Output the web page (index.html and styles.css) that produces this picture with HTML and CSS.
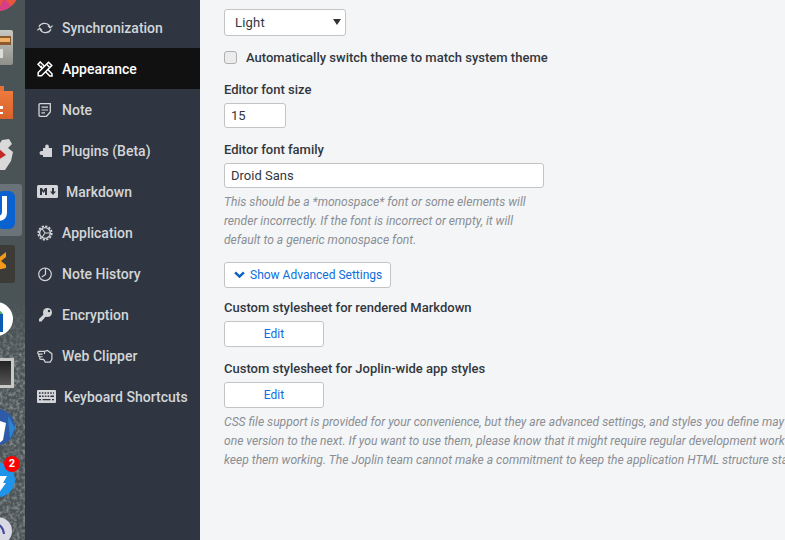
FILE: index.html
```html
<!DOCTYPE html>
<html lang="en">
<head>
<meta charset="utf-8">
<title>Joplin options</title>
<link rel="stylesheet" href="styles.css">
</head>
<body>
<div class="app">
  <aside class="dock">
    <svg class="dock-art" width="25" height="540" viewBox="0 0 25 540">
      <defs>
        <filter id="rock" x="0" y="0" width="100%" height="100%">
          <feTurbulence type="fractalNoise" baseFrequency="0.3" numOctaves="3" seed="4"/>
          <feColorMatrix values="0 0 0 0 .5  0 0 0 0 .51  0 0 0 0 .5  1.2 0 0 0 -.45"/>
        </filter>
        <linearGradient id="fade" x1="0" y1="0" x2="0" y2="1">
          <stop offset="0" stop-color="#fff" stop-opacity="0"/>
          <stop offset=".25" stop-color="#fff" stop-opacity="1"/>
        </linearGradient>
        <mask id="fadeMask"><rect y="300" width="25" height="240" fill="url(#fade)"/></mask>
        <linearGradient id="fileBody" x1="0" y1="0" x2="0" y2="1">
          <stop offset="0" stop-color="#c9c9c4"/><stop offset="1" stop-color="#8f8f8a"/>
        </linearGradient>
        <linearGradient id="screen" x1="0" y1="0" x2="0" y2="1">
          <stop offset="0" stop-color="#222"/><stop offset="1" stop-color="#555"/>
        </linearGradient>
        <linearGradient id="bag" x1="0" y1="0" x2="0" y2="1">
          <stop offset="0" stop-color="#ee7a3d"/><stop offset="1" stop-color="#d9622b"/>
        </linearGradient>
      </defs>
      <rect y="300" width="25" height="240" filter="url(#rock)" mask="url(#fadeMask)"/>
      <circle cx="-2" cy="-10" r="21" fill="#e8563f"/>
      <path d="M-2 11A21 21 0 0 0 11 6L4 -2Z" fill="#d63f88"/>
      <rect x="-4" y="30" width="17" height="35" rx="2" fill="url(#fileBody)"/>
      <rect x="-4" y="36" width="15" height="9" fill="#8d5a30"/>
      <rect x="-4" y="38" width="14" height="4" fill="#f0b267"/>
      <rect x="-4" y="49" width="7" height="9" fill="#dcdcd8"/>
      <path d="M-2 91H13V119H-2Z" fill="url(#bag)"/>
      <path d="M0 91V86H4V91Z" fill="#e66f33"/>
      <rect x="-2" y="106" width="5" height="3" fill="#fff"/>
      <rect x="-2" y="112" width="5" height="2" fill="#fff"/>
      <path d="M2 140L9 139L12 144L8 148L13 152L11 161L5 170H-2V146Z" fill="#d9d9d9"/>
      <path d="M-2 148L6 155L-2 160Z" fill="#c22a2a"/>
      <rect x="-3" y="184" width="25" height="52" rx="3" fill="#6a7378"/>
      <rect x="-3" y="191" width="18" height="38" rx="6" fill="#0a62d0"/>
      <path d="M2 196H7V212C7 219 3 221 -3 221V216C1 216 2 214 2 212Z" fill="#fff"/>
      <rect x="-3" y="245" width="18" height="38" rx="3" fill="#3d3b38"/>
      <path d="M-3 259L6 252V257L1 261L6 265V268L-3 270V264Z" fill="#f39a1b"/>
      <circle cx="-4" cy="319" r="17" fill="#fff"/>
      <path d="M-3 314H3V332H-3Z" fill="#0d5bb5"/>
      <path d="M-3 307L3 314H-3Z" fill="#48ad63"/>
      <rect x="-3" y="358" width="17" height="30" fill="#c8c8c4"/>
      <rect x="-3" y="361" width="14" height="24" fill="url(#screen)"/>
      <circle cx="-3" cy="427" r="18" fill="#2f5aa8"/>
      <path d="M-3 420L6 423L3 440L-3 445Z" fill="#fff"/>
      <path d="M8 416L15 428L10 439Z" fill="#2a86cf"/>
      <circle cx="-2" cy="480" r="17" fill="#2094e8"/>
      <path d="M-3 476H7L3 483H6L-2 494L0 485H-3Z" fill="#fff"/>
      <circle cx="-2" cy="531" r="14" fill="#d9d9e6"/>
      <path d="M-3 524Q3 526 4 534" fill="none" stroke="#3f4a99" stroke-width="2"/>
    </svg>
    <span class="badge">2</span>
  </aside>
  <nav class="side">
    <a class="item"><svg class="ico" viewBox="0 0 16 16"><path d="M1.9 6.6A6.2 6.2 0 0 1 13.2 7.5M14 9.4A6.2 6.2 0 0 1 2.7 8.5" fill="none" stroke="currentColor" stroke-width="1.2"/><path d="M10.9 5.6L13.2 8L15.6 5.6M0.4 10.4L2.7 8L5.1 10.4" fill="none" stroke="currentColor" stroke-width="1.2"/></svg><span>Synchronization</span></a>
    <a class="item active"><svg class="ico" viewBox="0 0 16 16"><path d="M3.2 1L15 12.8V15H12.8L1 3.2Z" fill="none" stroke="currentColor" stroke-width="1.5"/><path d="M5 5L3.5 6.5M7.5 7.5L6 9" stroke="currentColor" stroke-width="1.2"/><path d="M11.5 1.2L14.8 4.5L4.5 14.8H1.2V11.5Z" fill="#111" stroke="currentColor" stroke-width="1.5"/><path d="M9.5 3.2L12.8 6.5" stroke="currentColor" stroke-width="1.3"/></svg><span>Appearance</span></a>
    <a class="item"><svg class="ico" viewBox="0 0 16 16"><path d="M3 1.7H13.3V10L9.5 14.3H3A1 1 0 0 1 2 13.3V2.7A1 1 0 0 1 3 1.7Z" fill="none" stroke="currentColor" stroke-width="1.3"/><path d="M4.5 5.2H11M4.5 8H11M4.5 10.8H8" stroke="currentColor" stroke-width="1.2"/></svg><span>Note</span></a>
    <a class="item"><svg class="ico" viewBox="0 0 16 16"><path d="M6 5H8.2V3.2A1.8 1.8 0 0 1 11.8 3.2V5H15V14H6V12H4.5A2 2 0 0 1 4.5 8H6Z" fill="currentColor"/></svg><span>Plugins (Beta)</span></a>
    <a class="item wide"><svg class="ico md" viewBox="0 0 21 13"><rect width="21" height="13" rx="1.5" fill="currentColor"/><path d="M3 10V3H5L6.5 5.5L8 3H10V10H8V6L6.5 8L5 6V10ZM15 3H17V6.5H19L16 10L13 6.5H15Z" fill="#2f3641"/></svg><span>Markdown</span></a>
    <a class="item"><svg class="ico" viewBox="0 0 16 16"><circle cx="8" cy="8" r="5.4" fill="none" stroke="currentColor" stroke-width="1.4"/><circle cx="8" cy="8" r="6.8" fill="none" stroke="currentColor" stroke-width="1.6" stroke-dasharray="2.2 1.36"/><path d="M8 8H13M8 8L5 3.5M8 8L5 12.5" stroke="currentColor" stroke-width="1.1"/></svg><span>Application</span></a>
    <a class="item"><svg class="ico" viewBox="0 0 16 16"><circle cx="8" cy="8.3" r="6.3" fill="none" stroke="currentColor" stroke-width="1.2"/><path d="M8.5 2V8.5L4.8 11" fill="none" stroke="currentColor" stroke-width="1.2"/></svg><span>Note History</span></a>
    <a class="item"><svg class="ico" viewBox="0 0 16 16"><circle cx="10.5" cy="5.5" r="4.5" fill="currentColor"/><circle cx="12" cy="4" r="1.2" fill="#2f3641"/><path d="M8 6L10 8L4.5 14.5H2V12Z" fill="currentColor"/></svg><span>Encryption</span></a>
    <a class="item"><svg class="ico" viewBox="0 0 17 16"><path d="M8 3.2H2.2A1.4 1.4 0 0 0 2.2 6H6M6 6H3.2A1.4 1.4 0 0 0 3.2 8.8H6M6 8.8H4.2A1.4 1.4 0 0 0 4.2 11.6H7L8.8 14.5H14L15.8 11.5V5.5L11 2.2L8 3.2V6" fill="none" stroke="currentColor" stroke-width="1.3"/></svg><span>Web Clipper</span></a>
    <a class="item kbd"><svg class="ico key" viewBox="0 0 19 13"><rect width="19" height="13" rx="1" fill="currentColor"/><path d="M2 3H3.6M4.8 3H6.4M7.6 3H9.2M10.4 3H12M13.2 3H14.8M16 3H17M2 6.2H4M5 6.2H6.6M7.8 6.2H9.4M10.6 6.2H12.2M13.4 6.2H17M2 9.6H4M5.5 9.6H13.5M15 9.6H17" stroke="#2f3641" stroke-width="1.4"/></svg><span>Keyboard Shortcuts</span></a>
  </nav>
  <main class="panel">
    <div class="select">Light<span class="caret"></span></div>
    <label class="check"><span class="box"></span><span>Automatically switch theme to match system theme</span></label>
    <h3 class="label first">Editor font size</h3>
    <input class="num" value="15">
    <h3 class="label fam">Editor font family</h3>
    <input class="text" value="Droid Sans">
    <p class="hint narrow">This should be a *monospace* font or some elements will render incorrectly. If the font is incorrect or empty, it will default to a generic monospace font.</p>
    <button class="adv"><svg class="chev" viewBox="0 0 10 7"><path d="M1 1.2L5 5L9 1.2" fill="none" stroke="currentColor" stroke-width="2.2"/></svg>Show Advanced Settings</button>
    <h3 class="label css">Custom stylesheet for rendered Markdown</h3>
    <button class="edit">Edit</button>
    <h3 class="label css2">Custom stylesheet for Joplin-wide app styles</h3>
    <button class="edit">Edit</button>
    <p class="hint wide-hint">CSS file support is provided for your convenience, but they are advanced settings, and styles you define may<br>one version to the next. If you want to use them, please know that it might require regular development work<br>keep them working. The Joplin team cannot make a commitment to keep the application HTML structure sta</p>
  </main>
</div>
</body>
</html>
```

FILE: styles.css
```css
* { box-sizing: border-box; }
html, body { margin: 0; height: 100%; overflow: hidden; }
body { font-family: Roboto, sans-serif; }
.app { display: flex; width: 785px; height: 540px; overflow: hidden; }
.dock { position: relative; flex: 0 0 25px; background: #4a5356; }
.dock-art { display: block; }
.badge { position: absolute; left: 4px; top: 456px; width: 16px; height: 16px; border-radius: 50%; background: #f00; color: #fff; font: 700 11px/16px Roboto, sans-serif; text-align: center; }
.side { flex: 0 0 175px; background: #2f3641; padding-top: 7px; }
.item { display: flex; align-items: center; height: 41px; padding-left: 12px; color: #d3d5d8; font-size: 14px; font-weight: 500; gap: 9px; }
.item.active { background: #111; color: #fff; }
.ico { width: 16px; height: 16px; flex: none; }
.ico.md { width: 21px; height: 13px; }
.item.wide { gap: 8px; }
.ico.key { width: 19px; height: 13px; }
.item.kbd { gap: 8px; }
.panel { flex: 1 0 0; min-width: 0; background: #f4f5f6; padding: 9px 0 0 24px; color: #32373e; white-space: nowrap; }
.select { position: relative; width: 122px; height: 27px; background: #fff; border: 1px solid #c4c4c4; border-radius: 3px; font-size: 13px; line-height: 25px; padding-left: 10px; letter-spacing: .2px; }
.caret { position: absolute; right: 4px; top: 9px; border: 4px solid transparent; border-top: 6px solid #333; border-bottom: 0; }
.check { display: flex; align-items: center; gap: 9px; margin-top: 12px; height: 18px; font-size: 13px; font-weight: 500; }
.box { width: 13px; height: 13px; border: 1px solid #b0b0b0; border-radius: 3px; background: #ececec; }
.label { margin: 0; font-size: 13px; font-weight: 500; line-height: 18px; }
.label.first { margin-top: 15px; }
.label.fam { margin-top: 13px; }
.label.css { margin-top: 11px; }
.label.css2 { margin-top: 13px; }
.num, .text { display: block; margin-top: 4px; height: 25px; border: 1px solid #c4c4c4; border-radius: 3px; background: #fff; font: 13px Roboto, sans-serif; color: #32373e; padding: 0 6px; outline: 0; }
.num { width: 62px; }
.text { width: 320px; }
.hint { margin: 0; color: #8a8e95; font-size: 12.1px; font-style: italic; line-height: 19px; }
.narrow { margin-top: 5px; width: 320px; white-space: normal; }
.adv { display: flex; align-items: center; gap: 5px; margin-top: 12px; width: 167px; height: 26px; padding: 0 0 0 9px; background: #fff; border: 1px solid #c4c4c4; border-radius: 3px; color: #0b6ede; font: 12px Roboto, sans-serif; }
.chev { width: 11px; height: 8px; color: #0b5fc0; }
.edit { display: block; margin-top: 4px; width: 100px; height: 26px; background: #fff; border: 1px solid #c4c4c4; border-radius: 3px; color: #0b6ede; font: 12px Roboto, sans-serif; }
.wide-hint { margin-top: 5px; }
```
